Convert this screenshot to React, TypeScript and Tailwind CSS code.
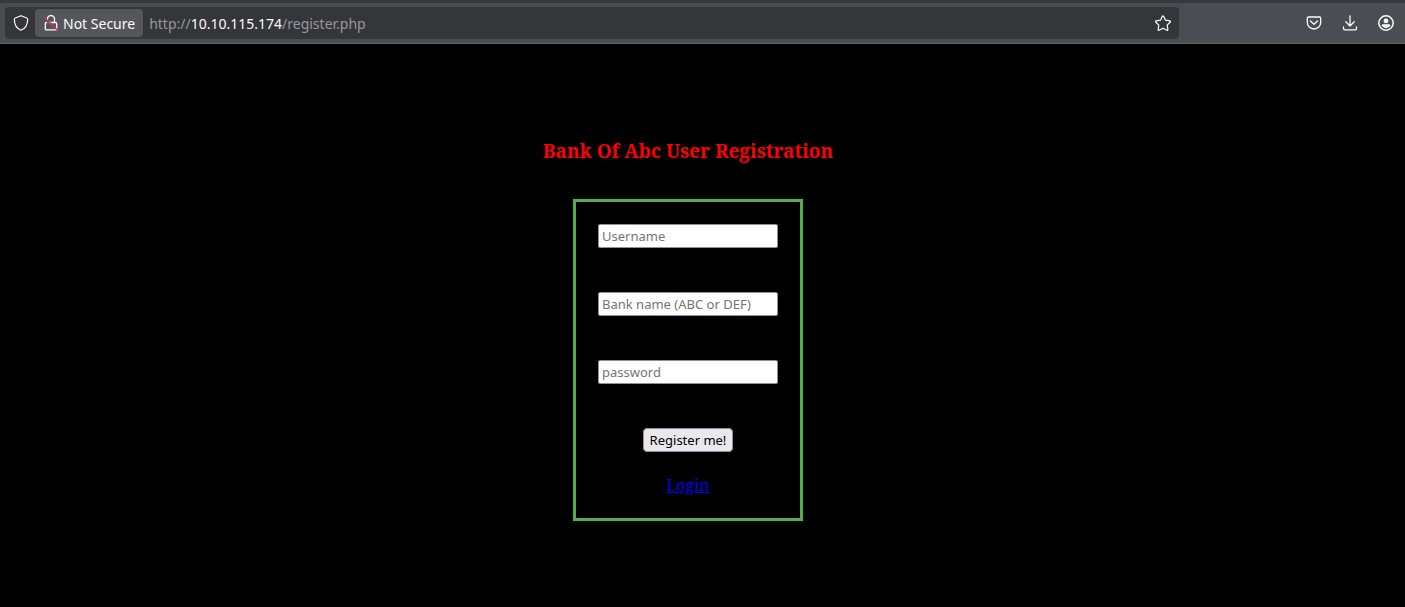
import React from "react";

const stroke = {
  fill: "none",
  stroke: "currentColor",
  strokeLinecap: "round" as const,
  strokeLinejoin: "round" as const,
};

function ShieldIcon() {
  return (
    <svg viewBox="0 0 16 16" className="size-4" aria-hidden="true" {...stroke} strokeWidth="1.2">
      <path d="M8 .7 13.800 3c.6.2.9.6.9 1.200C14.600 9.300 12.600 13.400 8 15.300 3.400 13.400 1.400 9.300 1.300 4.200 1.300 3.600 1.600 3.200 2.200 3Z" />
    </svg>
  );
}

function InsecureLockIcon() {
  return (
    <svg viewBox="0 0 16 16" className="size-4" aria-hidden="true" {...stroke} strokeWidth="1.3">
      <path d="M4.500 4.500V4a3.500 3.500 0 0 1 7 0v3.500M6.500 7.500h6a1.200 1.200 0 0 1 1.200 1.200v5a1.200 1.200 0 0 1-1.200 1.200h-9a1.200 1.200 0 0 1-1.200-1.200v-5c0-.7.5-1.200 1.200-1.200" />
      <path d="M1.500 2.500 14.500 15" stroke="#e22850" />
    </svg>
  );
}

function StarIcon() {
  return (
    <svg viewBox="0 0 16 16" className="size-4" aria-hidden="true" {...stroke} strokeWidth="1.2">
      <path d="M7.500 1.100a.6.6 0 0 1 1 0l2 4.100 4.400.7c.6.1.8.7.4 1.100l-3.100 3.200.7 4.500c.1.500-.4.900-.9.600L8 13.200l-4 2.100c-.5.300-1-.1-.9-.6l.7-4.500L.7 7c-.4-.4-.2-1 .4-1.100l4.400-.7Z" />
    </svg>
  );
}

function PocketIcon() {
  return (
    <svg viewBox="0 0 16 16" className="size-4" aria-hidden="true" {...stroke} strokeWidth="1.300">
      <path d="M2.400 2h11.200c.7 0 1.100.5 1.100 1.100v4.200a6.700 6.700 0 0 1-13.400 0V3.100C1.300 2.500 1.700 2 2.400 2Z" />
      <path d="m4.500 6 3.500 3.200L11.500 6" />
    </svg>
  );
}

function DownloadIcon() {
  return (
    <svg viewBox="0 0 16 16" className="size-4" aria-hidden="true" {...stroke} strokeWidth="1.300">
      <path d="M8 .8v10M3.800 6.800 8 11l4.200-4.200M1.500 12v1.500c0 .8.500 1.300 1.300 1.300h10.400c.8 0 1.300-.5 1.300-1.300V12" />
    </svg>
  );
}

function AccountIcon() {
  return (
    <svg viewBox="0 0 16 16" className="size-4" aria-hidden="true">
      <circle cx="8" cy="8" r="7.200" fill="none" stroke="currentColor" strokeWidth="1.500" />
      <circle cx="8" cy="5.900" r="2.400" fill="currentColor" />
      <path d="M5 9.300h6c.8 0 1.300.6 1.300 1.300-.8 1.600-2.400 2.500-4.300 2.500s-3.500-.9-4.300-2.500c0-.7.500-1.300 1.300-1.300Z" fill="currentColor" />
    </svg>
  );
}

function BrowserBar() {
  return (
    <header className="flex h-11 items-center gap-3 border-t-3 border-b border-t-[#35383d] border-b-[#5f6266] bg-[#4a4d51] pl-[5px] pr-[11px] font-['Noto_Sans',sans-serif] text-sm text-[#fbfbfe]">
      <div className="mr-[115px] flex h-8 min-w-0 flex-1 items-center rounded-sm bg-[#35363a] pr-2">
        <button type="button" aria-label="Tracking protection" className="flex w-[30px] justify-center pl-[2px]">
          <ShieldIcon />
        </button>
        <button type="button" className="flex h-7 shrink-0 items-center gap-1 rounded-sm bg-[#55565a] px-2">
          <InsecureLockIcon />
          <span className="pt-px">Not Secure</span>
        </button>
        <p className="min-w-0 flex-1 truncate pt-px pl-[6px] text-[#97979a]">
          http://<span className="text-[#fbfbfe]">10.10.115.174</span>/register.php
        </p>
        <button type="button" aria-label="Bookmark this page">
          <StarIcon />
        </button>
      </div>
      <div className="flex items-center gap-5">
        <button type="button" aria-label="Save to Pocket">
          <PocketIcon />
        </button>
        <button type="button" aria-label="Downloads">
          <DownloadIcon />
        </button>
        <button type="button" aria-label="Account">
          <AccountIcon />
        </button>
      </div>
    </header>
  );
}

const fields = [
  { name: "username", type: "text", placeholder: "Username" },
  { name: "bank", type: "text", placeholder: "Bank name (ABC or DEF)" },
  { name: "password", type: "password", placeholder: "password" },
];

export default function App() {
  return (
    <div className="flex min-h-screen flex-col bg-black">
      <BrowserBar />
      <main className="flex flex-col items-center pt-[93px] pr-[29px] font-['Noto_Serif','DejaVu_Serif',serif]">
        <h1 className="text-[19px] leading-7 font-bold text-[#ff0000]">Bank Of Abc User Registration</h1>
        <form
          onSubmit={(event) => event.preventDefault()}
          className="mt-[34px] flex flex-col items-center border-3 border-[#4caf50] px-[22px] py-[22px]"
        >
          <div className="flex flex-col items-center gap-11">
            {fields.map((field) => (
              <input
                key={field.name}
                name={field.name}
                type={field.type}
                placeholder={field.placeholder}
                aria-label={field.placeholder}
                className="h-6 w-[180px] rounded-xs border border-[#8f8f9d] bg-white px-[3px] font-['Noto_Sans',sans-serif] text-[13px] text-black placeholder:text-[#757575]"
              />
            ))}
            <button
              type="submit"
              className="h-6 rounded-sm border border-[#8f8f9d] bg-[#e9e9ed] px-[6px] font-['Noto_Sans',sans-serif] text-[13px] leading-5 text-black"
            >
              Register me!
            </button>
          </div>
          <a href="#login" className="mt-[22px] text-base leading-[22px] text-[#0000ee] underline">
            Login
          </a>
        </form>
      </main>
    </div>
  );
}
